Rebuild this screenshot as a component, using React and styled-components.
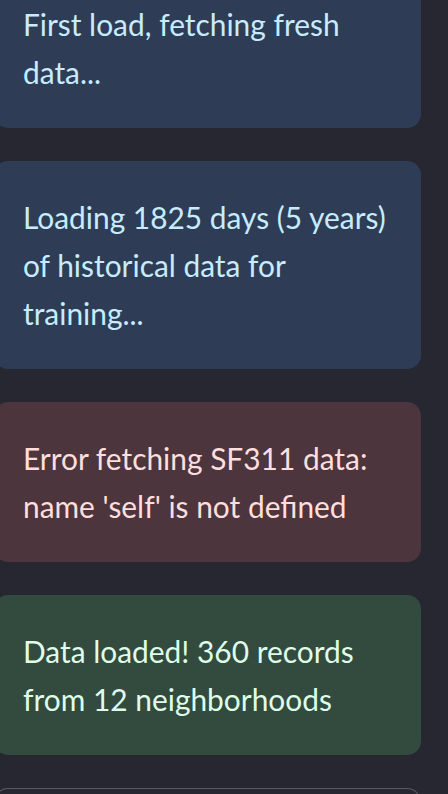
import React from 'react';
import styled, { createGlobalStyle } from 'styled-components';

const GlobalStyle = createGlobalStyle`
  html, body {
    margin: 0;
    padding: 0;
    background: #262730;
    overflow: hidden;
  }
`;

const palette = {
  info: { bg: '#2e3d55', fg: '#c7ebff' },
  error: { bg: '#4c353c', fg: '#ffdede' },
  success: { bg: '#334a3e', fg: '#dffde9' },
};

const Stack = styled.div`
  display: flex;
  flex-direction: column;
  gap: 33px;
  width: 427px;
  margin: -32px 0 0 -6px;
`;

const Alert = styled.div`
  box-sizing: border-box;
  padding: 32px 29px;
  border-radius: 14px;
  background: ${({ kind }) => palette[kind].bg};
  color: ${({ kind }) => palette[kind].fg};
  font-family: Lato, 'Noto Sans', sans-serif;
  font-size: 29.9px;
  line-height: 48px;
`;

// top of the next (empty) bordered container, cut by the window
const Panel = styled.div`
  height: 24px;
  border: 1.5px solid #595a63;
  border-bottom: none;
  border-radius: 14px 14px 0 0;
`;

const messages = [
  { kind: 'info', text: 'First load, fetching fresh data...' },
  { kind: 'info', text: 'Loading 1825 days (5 years) of historical data for training...' },
  { kind: 'error', text: "Error fetching SF311 data: name 'self' is not defined" },
  { kind: 'success', text: 'Data loaded! 360 records from 12 neighborhoods' },
];

const App = () => (
  <>
    <GlobalStyle />
    <Stack>
      {messages.map((m) => (
        <Alert key={m.text} kind={m.kind}>
          {m.text}
        </Alert>
      ))}
      <Panel />
    </Stack>
  </>
);

export default App;
